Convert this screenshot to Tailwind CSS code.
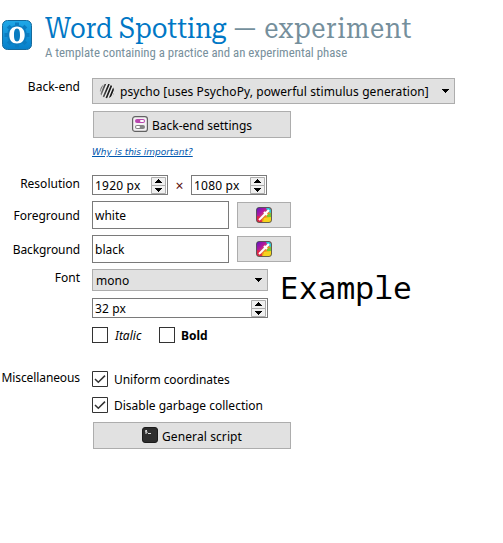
<!DOCTYPE html>
<html lang="en">
<head>
<meta charset="utf-8">
<title>Word Spotting</title>
<script src="https://cdn.jsdelivr.net/npm/@tailwindcss/browser@4"></script>
</head>
<body class="w-[503px] h-[543px] overflow-hidden bg-white text-black font-['Noto_Sans',sans-serif] text-[12px] leading-4 whitespace-nowrap">
<svg width="0" height="0" class="absolute">
  <defs>
    <linearGradient id="blue" x2="0" y2="1"><stop stop-color="#20a8e8"/><stop offset="1" stop-color="#067fc9"/></linearGradient>
    <clipPath id="disc"><circle cx="8" cy="8" r="7.2"/></clipPath>
    <linearGradient id="stripe" gradientUnits="userSpaceOnUse" x1="0" x2="16"><stop stop-color="#999"/><stop offset=".5" stop-color="#222"/><stop offset="1" stop-color="#111"/></linearGradient>
    <linearGradient id="hue" x1="0" y1="0" x2="1" y2="1"><stop offset="0" stop-color="#5516c8"/><stop offset=".35" stop-color="#b8189a"/><stop offset=".6" stop-color="#f08a20"/><stop offset="1" stop-color="#f4e61c"/></linearGradient>
    <symbol id="spin" viewBox="0 0 15 17"><path fill="#f0f0f0" stroke="#adadad" d="M.5.5h14v8H.5zM.5 8.500h14v8H.5z"/><path d="M4 6h7v-1h-1v-1h-1v-1h-1v-1h-1v1h-1v1h-1v1h-1zM4 11h7v1h-1v1h-1v1h-1v1h-1v-1h-1v-1h-1v-1h-1z"/></symbol>
    <symbol id="down" viewBox="0 0 7 4"><path d="M0 0h7v1h-1v1h-1v1h-1v1h-1v-1h-1v-1h-1v-1h-1z"/></symbol>
    <symbol id="check" viewBox="0 0 16 16"><path fill="#fff" stroke="#333" d="M.5.5h15v15H.5z"/><path fill="none" stroke="#333" stroke-width="1.500" d="M3 8l3.300 3.300L13 4.600"/></symbol>
    <symbol id="picker" viewBox="0 0 16 16"><rect x=".5" y=".5" width="15" height="15" rx="2.500" fill="url(#hue)"/><path fill="#2cc5d5" d="M10 1h3q2 0 2 2v3l-3-1z"/><path fill="#75c92e" d="M11 8l4-2v5l-4-1z"/><path fill="#f4d41c" d="M8 11l7-1v3q0 2-2 2H7z"/><path fill="#df2447" d="M1 9l4 1 1 5H3q-2 0-2-2z"/><rect x=".5" y=".5" width="15" height="15" rx="2.500" fill="none" stroke="#444" stroke-opacity=".8"/><path d="M3 13L10 6" stroke="#fff" stroke-width="2"/><path d="M8 5L11 8M9.500 6.500L13 3" stroke="#fff" stroke-width="2.200"/></symbol>
  </defs>
</svg>
<header class="flex h-[78px] pt-[13px]">
  <svg class="mt-[6px] ml-[1px] h-8 w-8 shrink-0" viewBox="0 0 32 32">
    <rect x="1.500" y="1.500" width="29" height="29" rx="5" fill="url(#blue)" stroke="#176a9b"/>
    <g fill="#0b7cc0"><circle cx="16" cy="16" r="10"/><path id="t" d="M14 3.500h4v25h-4z"/><use href="#t" transform="rotate(45 16 16)"/><use href="#t" transform="rotate(90 16 16)"/><use href="#t" transform="rotate(135 16 16)"/></g>
    <path fill="#fff" fill-rule="evenodd" d="M16 7.500c5 0 7.700 3.500 7.700 8.500s-2.700 8.500-7.700 8.500-7.700-3.500-7.700-8.500 2.700-8.500 7.700-8.500zM16 9.500c-2.500 0-3 3-3 6.500s.5 6.500 3 6.500 3-3 3-6.500-.5-6.500-3-6.500z"/>
  </svg>
  <div class="ml-[12px]">
    <h1 class="h-[31px] w-fit origin-left scale-x-[.917] font-['Roboto_Slab','Roboto_Serif',serif] text-[28px] leading-8 text-[#0077c5]">Word Spotting <span class="text-[#758f9c]">—<span class="tracking-[.65px]"> experiment</span></span></h1>
    <p class="text-[12.8px] leading-[18px] text-[#78909c] font-['Roboto_Condensed',sans-serif]">A template containing a practice and an experimental phase</p>
  </div>
</header>
<main class="grid grid-cols-[80px_1fr] gap-x-3">
  <label class="pt-[1px] text-right">Back-end</label>
  <div class="h-[97px]">
    <div class="flex h-[26px] w-[363px] items-center border border-[#adadad] bg-[#e1e1e1] pl-[6px] pr-[5px]">
      <svg class="h-4 w-4" viewBox="0 0 16 16"><g clip-path="url(#disc)"><path fill="#ededed" d="M0 0h16v16H0z"/><path stroke="url(#stripe)" stroke-width="1.700" d="M-1.500 13L5-2M.5 15L7.500-2M3.500 16L10.500 0M6.500 17L13.500 0M9.500 18L16 2M12.500 18L18 5"/></g></svg>
      <span class="ml-[5px] flex-1 pt-[2px] tracking-[.08px]">psycho [uses PsychoPy, powerful stimulus generation]</span>
      <svg class="h-1 w-[7px]"><use href="#down"/></svg>
    </div>
    <div class="mt-[7px] ml-[1px] flex h-[27px] w-[198px] items-center justify-center border border-[#adadad] bg-[#e1e1e1]">
      <svg class="mr-1 -mt-px h-4 w-4" viewBox="0 0 16 16"><rect x=".6" y=".6" width="14.800" height="14.800" rx="2.500" fill="#f4f2f4" stroke="#626262" stroke-width="1.200"/><rect x="3" y="3" width="10" height="4" rx="2" fill="#b846ae"/><rect x="8" y="4" width="4" height="2" rx="1" fill="#fff"/><rect x="3" y="9" width="10" height="4" rx="2" fill="#858585"/><rect x="4" y="10" width="4" height="2" rx="1" fill="#fff"/></svg>
      <span class="pt-[2px]">Back-end settings</span>
    </div>
    <a class="mt-[7px] block w-fit font-['DejaVu_Sans',sans-serif] text-[9px] leading-[14px] tracking-[-.03px] italic text-[#0057ae] underline underline-offset-1">Why is this important?</a>
  </div>

  <label class="pt-[1px] text-right">Resolution</label>
  <div class="flex h-[26px]">
    <div class="flex h-5 w-[76px] items-center justify-between border border-[#7a7a7a] pr-px pl-[2px]"><span class="pt-[2px] tracking-[.2px]">1920 px</span><svg class="h-[17px] w-[15px]"><use href="#spin"/></svg></div>
    <span class="w-[23px] pt-[3px] text-center text-[14px] text-[#5b1010]">×</span>
    <div class="flex h-5 w-[76px] items-center justify-between border border-[#7a7a7a] pr-px pl-[2px]"><span class="pt-[2px] tracking-[.2px]">1080 px</span><svg class="h-[17px] w-[15px]"><use href="#spin"/></svg></div>
  </div>

  <label class="pt-[7px] text-right">Foreground</label>
  <div class="flex h-[34px] gap-2">
    <div class="flex h-[28px] w-[137px] items-center border border-[#7a7a7a] pt-[2px] pl-[2px]">white</div>
    <div class="mt-px flex h-[26px] w-[54px] items-center justify-center border border-[#adadad] bg-[#e1e1e1]"><svg class="h-4 w-4"><use href="#picker"/></svg></div>
  </div>

  <label class="pt-[7px] text-right tracking-[-.1px]">Background</label>
  <div class="flex h-[34px] gap-2">
    <div class="flex h-[28px] w-[137px] items-center border border-[#7a7a7a] pt-[2px] pl-[2px]">black</div>
    <div class="mt-px flex h-[26px] w-[54px] items-center justify-center border border-[#adadad] bg-[#e1e1e1]"><svg class="h-4 w-4"><use href="#picker"/></svg></div>
  </div>

  <label class="pt-[1px] text-right">Font</label>
  <div class="flex h-[102px]">
    <div class="w-[176px]">
      <div class="flex h-[22px] items-center justify-between border border-[#adadad] bg-[#e1e1e1] pr-[5px] pl-[3px]"><span class="pt-[2px]">mono</span><svg class="h-1 w-[7px]"><use href="#down"/></svg></div>
      <div class="mt-[7px] flex h-5 items-center justify-between border border-[#7a7a7a] pr-px pl-[2px]"><span class="pt-[2px] tracking-[.1px]">32 px</span><svg class="h-[17px] w-[15px]"><use href="#spin"/></svg></div>
      <div class="mt-[9px] flex h-4 items-center">
        <span class="h-4 w-4 border border-[#333]"></span><span class="ml-[7px] w-[44px] pt-[2px] italic">Italic</span>
        <span class="h-4 w-4 border border-[#333]"></span><span class="ml-[6px] pt-[2px] font-bold">Bold</span>
      </div>
    </div>
    <div class="-mt-px ml-[12px] font-['Noto_Sans_Mono',monospace] text-[31.4px] leading-[38px]">Example</div>
  </div>

  <label class="-mt-px text-right tracking-[-.1px]">Miscellaneous</label>
  <div>
    <div class="flex h-4 items-center"><svg class="h-4 w-4"><use href="#check"/></svg><span class="ml-[6px] pt-[2px] tracking-[-.04px]">Uniform coordinates</span></div>
    <div class="mt-[10px] flex h-4 items-center"><svg class="h-4 w-4"><use href="#check"/></svg><span class="ml-[6px] pt-[2px]">Disable garbage collection</span></div>
    <div class="mt-[9px] ml-[1px] flex h-[27px] w-[198px] items-center justify-center border border-[#adadad] bg-[#e1e1e1]">
      <svg class="mr-1 -mt-px h-4 w-4" viewBox="0 0 16 16"><rect x=".5" y=".5" width="15" height="15" rx="2.500" fill="#2e2e2e" stroke="#1b1b1b"/><path fill="none" stroke="#ddd" d="M5 3.500H3.500v1.200H5v1.300H3M6 6.500h3"/></svg>
      <span class="pt-[2px] tracking-[.1px]">General script</span>
    </div>
  </div>
</main>
</body>
</html>
